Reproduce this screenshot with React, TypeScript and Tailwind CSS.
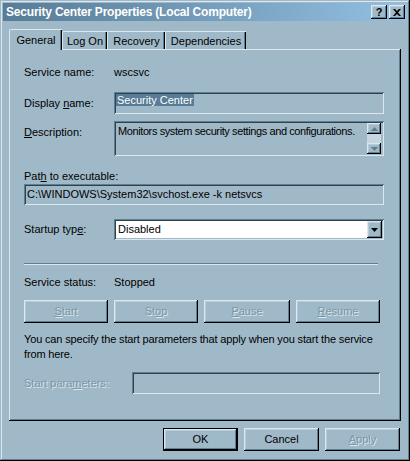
import React from 'react';

const raised =
  'bg-[#a0b9c8] shadow-[inset_-1px_-1px_#000,inset_1px_1px_#dce8ef,inset_-2px_-2px_#5f7e92,inset_2px_2px_#b7cbd8]';
const sunken =
  'shadow-[inset_1px_1px_#5f7e92,inset_-1px_-1px_#dce8ef,inset_2px_2px_#2f4250,inset_-2px_-2px_#a0b9c8]';
const disabled = 'text-[#7b97a8] [text-shadow:1px_1px_0_#dce8ef]';

const Btn = ({ label, w, off }: { label: React.ReactNode; w: string; off?: boolean }) => (
  <div className={`${w} h-[23px] ${raised} flex items-center justify-center ${off ? disabled : ''}`}>{label}</div>
);

const Tri = ({ down }: { down?: boolean }) => (
  <svg width="7" height="4" viewBox="0 0 7 4" className={down ? '' : 'rotate-180'}>
    <path d="M0 0h7L3.5 4z" fill="currentColor" />
  </svg>
);

export default function App() {
  return (
    <div className="w-[410px] h-[461px] bg-[#a0b9c8] p-[3px] flex flex-col font-['Liberation_Sans',Arial,sans-serif] text-[11px] leading-none text-black shadow-[inset_-1px_-1px_#000,inset_1px_1px_#a0b9c8,inset_-2px_-2px_#5f7e92,inset_2px_2px_#dce8ef]">
      {/* title bar */}
      <div className="h-[18px] bg-gradient-to-r from-[#587c96] to-[#93c0e2] flex items-center pl-[3px] pr-[2px]">
        <span className="font-bold text-white text-[12px] tracking-[-0.2px]">Security Center Properties (Local Computer)</span>
        <div className="ml-auto flex gap-[2px]">
          <div className={`w-[16px] h-[14px] ${raised} flex items-center justify-center font-bold text-[11px]`}>?</div>
          <div className={`w-[16px] h-[14px] ${raised} flex items-center justify-center`}>
            <svg width="8" height="7" viewBox="0 0 8 7">
              <path d="M0 0h2l2 2 2-2h2L5 3.5 8 7H6L4 5 2 7H0l3-3.5z" fill="#000" />
            </svg>
          </div>
        </div>
      </div>

      {/* tabs */}
      <div className="mt-[8px] ml-[6px] h-[20px] flex items-end relative z-10">
        <div className="w-[53px] bg-[#a0b9c8] border-l border-t border-[#dce8ef] rounded-tl-[2px] shadow-[inset_-1px_0_#000,inset_-2px_0_#5f7e92] flex items-center justify-center pt-[1px] -mb-px h-[21px]">
          General
        </div>
        {['Log On', 'Recovery', 'Dependencies'].map((t, i) => (
          <div
            key={t}
            className={`${['w-[45px]', 'w-[58px]', 'w-[81px]'][i]} h-[18px] border-t border-l border-[#dce8ef] rounded-tl-[2px] shadow-[inset_-1px_0_#000,inset_-2px_0_#5f7e92] flex items-center justify-center pt-[1px]`}
          >
            {t}
          </div>
        ))}
      </div>

      {/* panel */}
      <div className="ml-[6px] w-[392px] h-[372px] shadow-[inset_-1px_-1px_#000,inset_1px_1px_#dce8ef,inset_-2px_-2px_#5f7e92] pl-[15px] pr-[17px] flex flex-col">
        <div className="mt-[17px] h-[13px] flex items-center">
          <span className="w-[90px]">Service name:</span>
          <span>wscsvc</span>
        </div>

        <div className="mt-[13px] h-[22px] flex items-center">
          <span className="w-[90px]">
            Display <u>n</u>ame:
          </span>
          <div className={`flex-1 h-[22px] ${sunken} px-[2px] pt-[2px]`}>
            <span className="inline-block bg-[#587c96] text-white px-[1px] h-[12px] leading-[12px]">Security Center</span>
          </div>
        </div>

        <div className="mt-[7px] h-[35px] flex">
          <span className="w-[90px] pt-[6px]">
            <u>D</u>escription:
          </span>
          <div className={`flex-1 h-[35px] ${sunken} flex p-[2px]`}>
            <span className="flex-1 pl-[2px] pt-[2px] leading-[13px] whitespace-nowrap overflow-hidden tracking-[-0.4px]">
              Monitors system security settings and configurations.
            </span>
            <div className="w-[14px] flex flex-col mr-[1px]">
              <div className={`h-[11px] ${raised} flex items-center justify-center text-[#5f7e92]`}>
                <Tri />
              </div>
              <div className="flex-1 bg-[#c6d6e0]" />
              <div className={`h-[11px] ${raised} flex items-center justify-center text-[#5f7e92]`}>
                <Tri down />
              </div>
            </div>
          </div>
        </div>

        <div className="mt-[14px] h-[13px] flex items-center">
          Pat<u>h</u>&nbsp;to executable:
        </div>
        <div className={`mt-[1px] h-[21px] ${sunken} flex items-center px-[3px]`}>C:\WINDOWS\System32\svchost.exe -k netsvcs</div>

        <div className="mt-[14px] h-[21px] flex items-center">
          <span className="w-[90px]">
            Startup typ<u>e</u>:
          </span>
          <div className={`flex-1 h-[21px] ${sunken} bg-white flex items-center p-[2px]`}>
            <span className="flex-1 pl-[2px]">Disabled</span>
            <div className={`w-[15px] h-[17px] ${raised} flex items-center justify-center`}>
              <Tri down />
            </div>
          </div>
        </div>

        <div className="mt-[23px] h-[2px] border-t border-[#5f7e92] border-b border-b-[#dce8ef] mr-[6px]" />

        <div className="mt-[11px] h-[13px] flex items-center">
          <span className="w-[90px]">Service status:</span>
          <span>Stopped</span>
        </div>

        <div className="mt-[11px] flex gap-[6px] mr-[4px] justify-between">
          <Btn w="w-[84px]" off label={<><u>S</u>tart</>} />
          <Btn w="w-[84px]" off label={<>St<u>o</u>p</>} />
          <Btn w="w-[86px]" off label={<><u>P</u>ause</>} />
          <Btn w="w-[84px]" off label={<><u>R</u>esume</>} />
        </div>

        <p className="mt-[9px] leading-[15px] tracking-[-0.15px]">
          You can specify the start parameters that apply when you start the service from here.
        </p>

        <div className="mt-[10px] h-[22px] flex items-center mr-[4px]">
          <span className={`w-[108px] ${disabled}`}>
            Start para<u>m</u>eters:
          </span>
          <div className={`flex-1 h-[22px] ${sunken}`} />
        </div>
      </div>

      {/* bottom buttons */}
      <div className="mt-[7px] flex justify-end pr-[7px] gap-[6px]">
        <div className="w-[75px] h-[23px] border border-black">
          <div className={`w-full h-full ${raised} flex items-center justify-center`}>OK</div>
        </div>
        <Btn w="w-[75px]" label="Cancel" />
        <Btn w="w-[75px]" off label={<><u>A</u>pply</>} />
      </div>
    </div>
  );
}
